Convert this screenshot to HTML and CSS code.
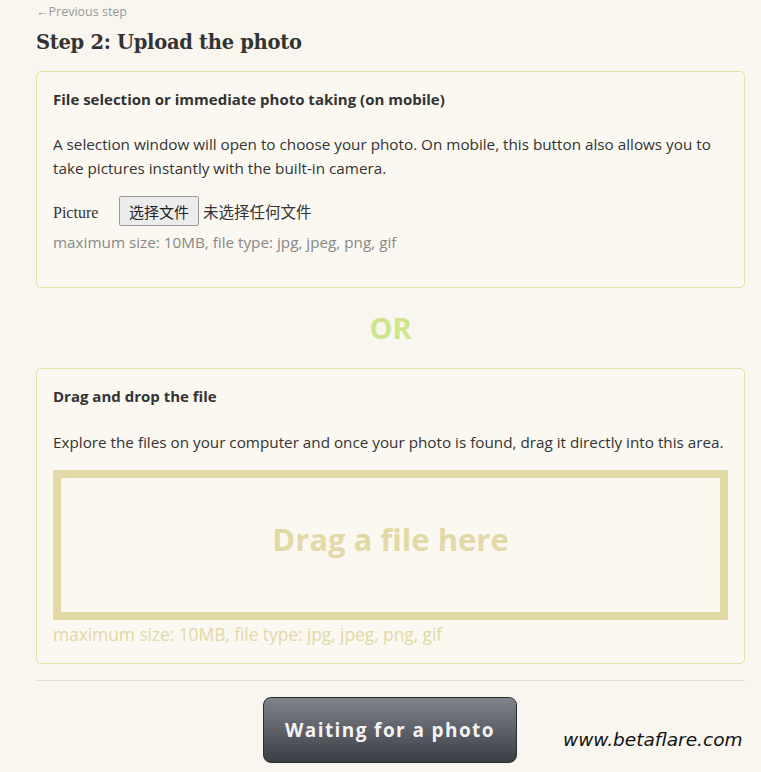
FILE: index.html
```html
<!DOCTYPE html>
<html lang="en">
<head>
  <meta charset="UTF-8">
  <meta name="viewport" content="width=device-width, initial-scale=1.0">
  <title>Step 2: Upload the photo</title>
  <link rel="stylesheet" href="styles.css">
</head>
<body>
  <div class="page">
    <a class="back" href="#">&larr;Previous step</a>
    <h1>Step 2: Upload the photo</h1>

    <section class="card">
      <h3>File selection or immediate photo taking (on mobile)</h3>
      <p>A selection window will open to choose your photo. On mobile, this button also allows you to take pictures instantly with the built-in camera.</p>
      <div class="file-row">
        <label>Picture</label>
        <button type="button" class="file-btn">选择文件</button>
        <span class="file-name">未选择任何文件</span>
      </div>
      <div class="hint">maximum size: 10MB, file type: jpg, jpeg, png, gif</div>
    </section>

    <div class="or">OR</div>

    <section class="card card-drop">
      <h3>Drag and drop the file</h3>
      <p>Explore the files on your computer and once your photo is found, drag it directly into this area.</p>
      <div class="dropzone">Drag a file here</div>
      <div class="hint hint-drop">maximum size: 10MB, file type: jpg, jpeg, png, gif</div>
    </section>

    <hr>

    <div class="actions">
      <button type="button" class="wait-btn">Waiting for a photo</button>
      <span class="watermark">www.betaflare.com</span>
    </div>
  </div>
</body>
</html>
```

FILE: styles.css
```css
body { margin: 0; background: #f8f6ee; color: #333; font-family: "Open Sans", "Noto Sans", sans-serif; font-size: 15.25px; }
.page { width: 709px; margin-left: 36px; padding-top: 3px; }
.back { display: block; color: #999; font-size: 12.5px; text-decoration: none; line-height: 18px; }
h1 { font-family: "DejaVu Serif", Georgia, serif; font-size: 19.5px; font-weight: bold; color: #333; margin: 9px 0 15px 0; line-height: 26px; letter-spacing: -0.3px; }
.card { border: 1px solid #d9e8a8; border-radius: 5px; background: #faf8f1; padding: 17px 16px 33px 16px; }
.card h3 { font-size: 15px; font-weight: bold; margin: 0; line-height: 20px; }
.card p { margin: 23px 0 16px 0; line-height: 24px; }
.file-row { display: flex; align-items: center; height: 30px; }
.file-row label { font-family: "Liberation Serif", "Times New Roman", serif; font-size: 16px; width: 66px; padding-top: 3px; }
.file-btn { font-family: "Noto Sans CJK SC", sans-serif; font-size: 15px; color: #222; background: #ececec; border: 1px solid #999; border-radius: 2px; height: 30px; padding: 0 9px; margin-right: 4px; }
.file-name { font-family: "Noto Sans CJK SC", sans-serif; font-size: 15.5px; color: #333; }
.hint { color: #888; line-height: 24px; margin-top: 4px; }
.or { text-align: center; font-size: 29px; font-weight: bold; color: #cde68c; line-height: 80px; }
.card-drop { padding-bottom: 17px; }
.card-drop p { margin: 24px 0 16px 0; }
.dropzone { height: 122px; border: 8px solid #e3d9a6; padding-bottom: 12px; display: flex; align-items: center; justify-content: center; font-size: 31px; font-weight: bold; color: #e3d9a6; }
.hint-drop { color: #e3d9a6; font-size: 17.5px; margin-top: 2px; letter-spacing: -0.1px; }
hr { border: none; border-top: 1px solid #e2dfd6; margin: 16px 0 16px 0; }
.actions { display: flex; align-items: flex-end; }
.wait-btn { margin-left: 227px; width: 254px; height: 66px; border: 1px solid #2b2d31; border-radius: 8px; background: linear-gradient(#80838b, #3b3e45); color: #f3f3f3; font-family: "Open Sans", sans-serif; font-size: 19px; font-weight: bold; letter-spacing: 1.4px; }
.watermark { margin-left: 46px; margin-bottom: 13px; font-family: "DejaVu Sans", sans-serif; font-style: italic; font-size: 18.5px; color: #111; }
```
